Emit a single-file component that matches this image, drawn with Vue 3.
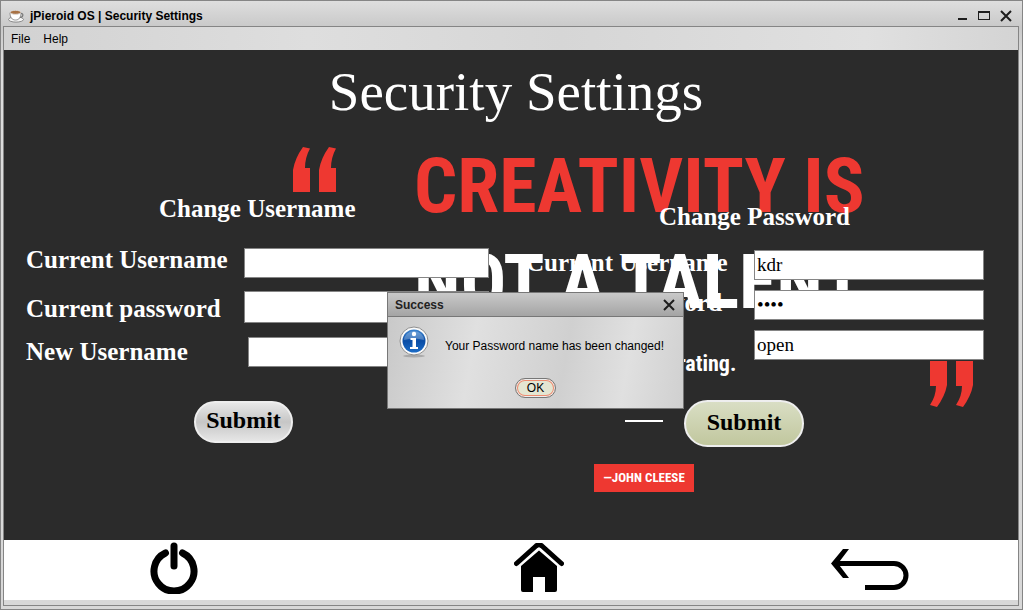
<script setup>
import { ref } from 'vue'

const usernameForm = ref({ current: '', password: '', next: '' })
const passwordForm = ref({ username: 'kdr', current: '1234', next: 'open' })
</script>

<template>
  <div class="window">
    <header class="titlebar">
      <svg class="cup" viewBox="0 0 16 14" aria-hidden="true">
        <ellipse cx="8" cy="10.5" rx="7.5" ry="2.6" fill="#f5f5f5" stroke="#777" stroke-width=".8" />
        <path d="M12 4.5c4-1 4 4-1 4" fill="none" stroke="#777" stroke-width="1.2" />
        <path d="M2 3.5c0 5 2 7.500 5.500 7.500s5.500-2.500 5.500-7.500z" fill="#fff" stroke="#777" stroke-width=".8" />
        <ellipse cx="7.500" cy="3.300" rx="5.500" ry="2" fill="#a87244" stroke="#ddd" stroke-width=".9" />
      </svg>
      <span class="title">jPieroid OS | Security Settings</span>
      <div class="controls">
        <button type="button" aria-label="Minimize">
          <svg viewBox="0 0 12 12"><path d="M2 8h9v2H2z" fill="#1d1d1d" /></svg>
        </button>
        <button type="button" aria-label="Maximize">
          <svg viewBox="0 0 12 12"><path d="M0 1h12v9H0zM1 3v6h10V3z" fill="#1d1d1d" fill-rule="evenodd" /></svg>
        </button>
        <button type="button" aria-label="Close">
          <svg viewBox="0 0 12 12"><path d="M1 1l10 10M11 1L1 11" stroke="#1d1d1d" stroke-width="2" /></svg>
        </button>
      </div>
    </header>

    <div class="client">
      <nav class="menubar">
        <button type="button">File</button>
        <button type="button">Help</button>
      </nav>

      <main class="desktop">
        <div class="wallpaper" aria-hidden="true">
          <svg class="mark open" viewBox="0 0 44 46">
            <path d="M10 0l7 1.500q-5 9-5 19.500h5v24H0V23Q2 11 10 0z" />
            <path d="M36 0l7 1.500q-5 9-5 19.500h5v24H26V23Q28 11 36 0z" />
          </svg>
          <div class="poster">
            <p class="headline red">CREATIVITY IS</p>
            <p class="headline">NOT A TALENT.</p>
            <p class="tagline">It is a way of operating.</p>
            <div class="rule"></div>
            <p class="author">—JOHN CLEESE</p>
          </div>
          <svg class="mark close" viewBox="0 0 44 46">
            <path d="M0 0h17v24q-2 11-10 22l-7-2q6-9 6-19H0z" />
            <path d="M26 0h17v24q-2 11-10 22l-7-2q6-9 6-19h-6z" />
          </svg>
        </div>

        <h1>Security Settings</h1>

        <div class="forms">
          <form class="username" @submit.prevent>
            <h2>Change Username</h2>
            <div class="row first">
              <label for="u1">Current Username</label>
              <input id="u1" v-model="usernameForm.current" type="text" />
            </div>
            <div class="row second">
              <label for="u2">Current password</label>
              <input id="u2" v-model="usernameForm.password" type="password" />
            </div>
            <div class="row third">
              <label for="u3">New Username</label>
              <input id="u3" v-model="usernameForm.next" type="text" />
            </div>
            <button type="submit" class="submit silver">Submit</button>
          </form>

          <form class="password" @submit.prevent>
            <h2>Change Password</h2>
            <div class="row">
              <label for="p1">Current Username</label>
              <input id="p1" v-model="passwordForm.username" type="text" />
            </div>
            <div class="row">
              <label for="p2">Current Password</label>
              <input id="p2" v-model="passwordForm.current" type="password" />
            </div>
            <div class="row">
              <label for="p3">New Password</label>
              <input id="p3" v-model="passwordForm.next" type="text" />
            </div>
            <button type="submit" class="submit olive">Submit</button>
          </form>
        </div>

        <section class="dialog" role="dialog" aria-labelledby="dialog-title">
          <header>
            <span id="dialog-title">Success</span>
            <button type="button" aria-label="Close dialog">
              <svg viewBox="0 0 12 12"><path d="M1 1l10 10M11 1L1 11" stroke="#1d1d1d" stroke-width="2" /></svg>
            </button>
          </header>
          <div class="message">
            <svg class="info" viewBox="0 0 30 32" aria-hidden="true">
              <defs>
                <linearGradient id="blue" x1="0" y1="0" x2="0" y2="1">
                  <stop offset="0" stop-color="#3c84cf" />
                  <stop offset=".5" stop-color="#0a4da6" />
                  <stop offset="1" stop-color="#1c6cc6" />
                </linearGradient>
              </defs>
              <ellipse cx="15" cy="30" rx="11" ry="1.500" fill="#999" opacity=".7" />
              <circle cx="15" cy="15" r="14" fill="#fafafa" stroke="#8f8f8f" />
              <circle cx="15" cy="15" r="11.500" fill="url(#blue)" />
              <path d="M5 14a10 9 0 0 1 20 0q-10-3-20 0z" fill="#fff" opacity=".25" />
              <circle cx="15" cy="8" r="2.200" fill="#fff" />
              <path d="M11.500 12h5.500v9h2v2h-8v-2h2.500v-7h-2z" fill="#fff" />
            </svg>
            <p>Your Password name has been changed!</p>
          </div>
          <button type="button" class="ok">OK</button>
        </section>
      </main>

      <footer class="dock">
        <button type="button" aria-label="Power">
          <svg width="48" height="52" viewBox="0 0 48 52">
            <path d="M15.500 11A20 20 0 1 0 32.500 11" fill="none" stroke="#000" stroke-width="7" stroke-linecap="round" />
            <path d="M24 4v20" stroke="#000" stroke-width="7" stroke-linecap="round" />
          </svg>
        </button>
        <button type="button" aria-label="Home">
          <svg width="50" height="50" viewBox="0 0 50 50">
            <path d="M2.500 20.500L22 3q3-2.500 6 0l19.500 17.500" fill="none" stroke="#000" stroke-width="5" stroke-linecap="round" stroke-linejoin="round" />
            <path d="M25 7.500L43 23v24q0 2-2 2H31V34H19v15H9q-2 0-2-2V23z" />
          </svg>
        </button>
        <button type="button" aria-label="Back">
          <svg width="78" height="44" viewBox="0 0 78 44">
            <path d="M4 16.500h59a12 12 0 0 1 0 24H34" fill="none" stroke="#000" stroke-width="5" />
            <path d="M12 2h6L7 16.500 18 31h-6L0 16.500z" />
          </svg>
        </button>
      </footer>
    </div>
  </div>
</template>

<style>
body {
  margin: 0;
}
</style>

<style scoped>
* {
  box-sizing: border-box;
}

h1,
h2,
p {
  margin: 0;
}

button {
  padding: 0;
  border: 0;
  background: none;
  color: inherit;
  font: inherit;
}

button svg {
  display: block;
}

.window {
  display: flex;
  flex-direction: column;
  min-height: 100vh;
  padding: 0 3px 3px 2px;
  border: 1px solid #858585;
  background: linear-gradient(#dedede, #c9c9c9 26px, #dcdcdc 60px, #d8d8d8);
  font: 12px/16px "Liberation Sans", Arial, sans-serif;
  color: #000;
}

.titlebar {
  display: flex;
  align-items: center;
  height: 25px;
  padding: 4px 7px 0 5px;
}

.cup {
  width: 16px;
  height: 14px;
  margin-right: 6px;
}

.title {
  font-weight: bold;
}

.controls {
  display: flex;
  gap: 10px;
  margin-left: auto;
}

.controls svg {
  width: 12px;
  height: 12px;
}

.client {
  display: flex;
  flex: 1;
  flex-direction: column;
  border: 1px solid #858585;
  padding-bottom: 5px;
}

.menubar {
  display: flex;
  gap: 13px;
  align-items: center;
  height: 23px;
  padding-left: 7px;
  background: linear-gradient(90deg, #d2d2d2, #dedede 30%, #d6d6d6 55%, #e0e0e0 85%, #d4d4d4);
}

.desktop {
  position: relative;
  flex: 1;
  overflow: hidden;
  background: #2b2b2b;
  color: #fff;
  font-family: "Liberation Serif", "Times New Roman", serif;
}

.wallpaper {
  position: absolute;
  inset: 0;
  font-family: "Roboto Condensed", "Liberation Sans Narrow", "Liberation Sans", sans-serif;
  font-weight: bold;
}

.mark {
  position: absolute;
  width: 44px;
  height: 46px;
  fill: #ee3831;
}

.mark.open {
  left: 289px;
  top: 97px;
}

.mark.close {
  left: 926px;
  top: 311px;
}

.poster {
  display: flex;
  flex-direction: column;
  width: 460px;
  margin: 88px 0 0 410px;
}

.headline {
  font-size: 76px;
  line-height: 96px;
  white-space: nowrap;
}

.red {
  color: #ee3831;
}

.tagline {
  margin: 20px 0 0 116px;
  font-size: 22px;
  line-height: 28px;
}

.rule {
  align-self: center;
  width: 38px;
  height: 2px;
  margin-top: 42px;
  background: #fff;
}

.author {
  align-self: center;
  margin-top: 42px;
  padding: 0 9px;
  background: #ee3831;
  font-size: 13px;
  line-height: 28px;
}

h1 {
  position: relative;
  padding: 14px 0 0 10px;
  font-size: 55px;
  font-weight: normal;
  line-height: 56px;
  text-align: center;
}

.forms {
  position: relative;
  display: grid;
  grid-template-columns: repeat(2, minmax(0, 1fr));
}

form {
  display: flex;
  flex-direction: column;
  align-items: flex-start;
}

h2,
label {
  font-size: 25px;
  font-weight: bold;
  line-height: 28px;
}

.row {
  display: flex;
  align-self: stretch;
  align-items: center;
  height: 30px;
}

label {
  flex: none;
  white-space: nowrap;
}

input {
  flex: 1;
  min-width: 0;
  height: 100%;
  padding: 0 2px;
  border: 1px solid #858585;
  background: #fff;
  color: #000;
  font: 19px/24px "Liberation Serif", "Times New Roman", serif;
}

.username {
  padding: 75px 22px 0;
}

.username h2 {
  margin: 0 0 25px 133px;
}

.username label {
  width: 218px;
}

.username .first label {
  padding-bottom: 6px;
}

.username .second {
  height: 32px;
  margin: 13px 0 14px;
}

.username .second label {
  padding-top: 4px;
}

.username .third label {
  width: 222px;
}

.password {
  gap: 10px;
  padding: 83px 34px 0 15px;
}

.password h2 {
  margin: 0 0 9px 133px;
}

.password label {
  width: 228px;
  padding-bottom: 4px;
}

.submit {
  padding-bottom: 4px;
  border: 2px solid #eee;
  border-radius: 24px;
  color: #000;
  font-size: 24px;
  font-weight: bold;
  line-height: 28px;
}

.silver {
  width: 99px;
  height: 42px;
  margin: 34px 0 0 168px;
  background: linear-gradient(#e8e8e8, #c6c6c6 50%, #e6e6e6);
}

.olive {
  width: 120px;
  height: 47px;
  margin: 30px 0 0 158px;
  background: linear-gradient(#d9dec4, #c1c79e);
}

.dialog {
  position: absolute;
  left: 383px;
  top: 242px;
  display: flex;
  flex-direction: column;
  width: 297px;
  padding: 0 2px 10px;
  border: 1px solid #777;
  background: linear-gradient(100deg, #c8c8c8, #e0e0e0 30%, #d0d0d0 60%, #e0e0e0 80%, #d0d0d0);
  color: #000;
  font: 12px/16px "Liberation Sans", Arial, sans-serif;
}

.dialog header {
  display: flex;
  align-items: center;
  justify-content: space-between;
  height: 24px;
  margin: 0 -2px;
  padding: 0 8px 0 7px;
  border-bottom: 1px solid #777;
  background: linear-gradient(#c9c9c9, #a4a4a4);
  color: #222;
  font-weight: bold;
}

.dialog header svg {
  width: 12px;
  height: 12px;
}

.message {
  display: flex;
  gap: 16px;
  padding: 9px 0 0 9px;
}

.info {
  flex: none;
  width: 30px;
  height: 32px;
}

.message p {
  padding-top: 12px;
  white-space: nowrap;
}

.ok {
  align-self: center;
  width: 41px;
  height: 20px;
  margin-top: 20px;
  border: 1px solid #777;
  border-radius: 10px;
  background: #e4e6d2;
  box-shadow: inset 0 0 0 1px #eee, inset 0 0 0 2px #ee8c70;
}

.dock {
  display: grid;
  grid-template-columns: 340px 1fr 340px;
  align-items: center;
  height: 60px;
  background: #fff;
}

.dock button {
  justify-self: center;
  margin-bottom: 4px;
}

.dock button:nth-child(2) {
  margin-left: 56px;
}

.dock button:last-child {
  margin: 0 0 2px 44px;
}
</style>
